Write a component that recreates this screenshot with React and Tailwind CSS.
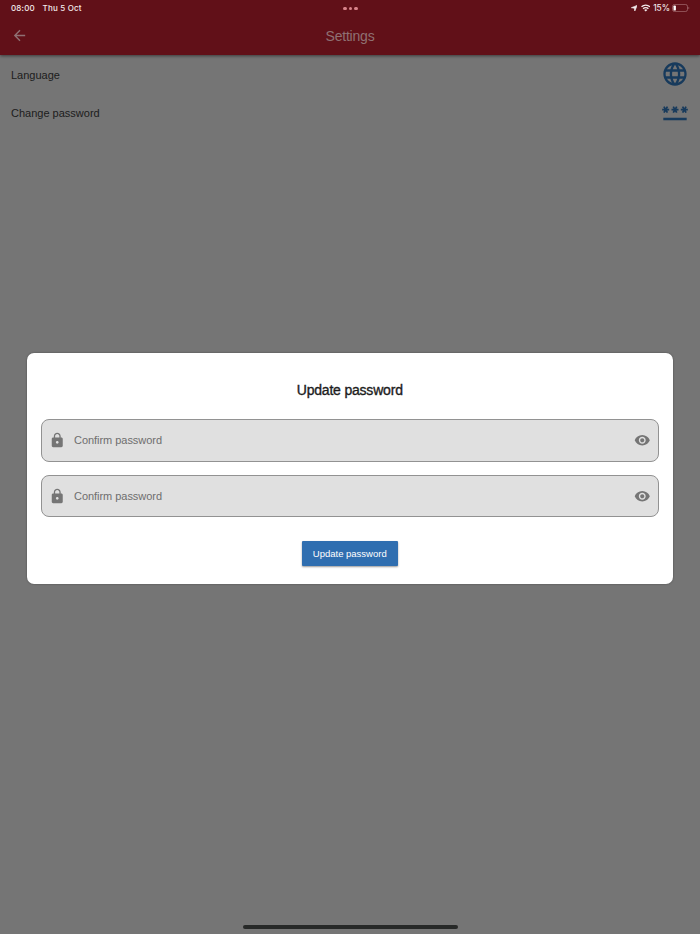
import { MdArrowBack, MdLanguage, MdLock, MdPassword, MdVisibility } from 'react-icons/md'

const SETTINGS = [
  { id: 'language', label: 'Language', Icon: MdLanguage },
  { id: 'password', label: 'Change password', Icon: MdPassword },
]

const FIELDS = ['new', 'confirm']

function StatusBar() {
  return (
    <div className="grid h-[16px] grid-cols-3 items-center pl-[11px] pr-[10px] font-['Inter',sans-serif] text-[8px] font-medium text-[#f3ebec]">
      <div className="flex gap-[7.5px] tracking-[0.2px]">
        <span>08:00</span>
        <span>Thu 5 Oct</span>
      </div>
      <div className="flex justify-center gap-[1.6px] pt-px">
        <span className="size-[3.8px] rounded-full bg-[#d9848b]" />
        <span className="size-[3.8px] rounded-full bg-[#d9848b]" />
        <span className="size-[3.8px] rounded-full bg-[#d9848b]" />
      </div>
      <div className="flex items-center justify-end">
        <svg className="mr-[3.5px] size-[6.5px]" viewBox="0 0 12 12" fill="currentColor">
          <path d="M11.4.6 7 11.4 6.2 5.8.6 5z" stroke="currentColor" strokeWidth="1.2" strokeLinejoin="round" />
        </svg>
        <svg className="mr-[3px] h-[7.5px] w-[9.5px]" viewBox="0 0 18 14" fill="none" stroke="currentColor" strokeWidth="2.7">
          <path d="M1 5.3a11.3 11.3 0 0 1 16 0" />
          <path d="M4 8.8a7 7 0 0 1 10 0" />
          <path d="M6 11.2a4.2 4.2 0 0 1 6 0L9 14z" fill="currentColor" stroke="none" />
        </svg>
        <span className="mr-[2px] text-[8.3px]">15%</span>
        <svg className="h-[8px] w-[18px]" viewBox="0 0 18 8" fill="none">
          <rect x=".5" y=".4" width="15" height="7.2" rx="2.2" stroke="#a1686d" strokeWidth=".8" />
          <rect x="1.5" y="1.4" width="2.4" height="5.2" rx=".9" fill="#fff" />
          <path d="M16.5 2.8c1 .4 1 2 0 2.4z" fill="#a1686d" />
        </svg>
      </div>
    </div>
  )
}

function PasswordField() {
  return (
    <div className="flex h-[42.5px] items-center rounded-[8px] border border-[#929292] bg-[#e0e0e0] pl-[7px] pr-[7.5px] text-[#757575]">
      <MdLock className="size-[16.5px]" />
      <input
        type="text"
        placeholder="Confirm password"
        className="ml-[9px] min-w-0 flex-1 bg-transparent text-[11px] tracking-[-0.04px] outline-none placeholder:text-[#6e6e6e]"
      />
      <MdVisibility className="size-[16.5px]" />
    </div>
  )
}

export default function App() {
  return (
    <div className="relative flex h-[934px] w-[700px] flex-col overflow-hidden bg-[#757575] font-['Liberation_Sans',Arial,sans-serif]">
      <header className="h-[55px] bg-[#611018] shadow-[0_1px_3px_rgba(0,0,0,0.5)]">
        <StatusBar />
        <div className="grid h-[39px] grid-cols-3 items-center px-[11px] text-[#8f7073]">
          <button type="button" aria-label="Back">
            <MdArrowBack className="size-[17px]" />
          </button>
          <h1 className="pt-px text-center text-[14px] tracking-[-0.2px]">Settings</h1>
        </div>
      </header>

      <ul className="flex-1">
        {SETTINGS.map(({ id, label, Icon }) => (
          <li key={id} className="flex h-[38px] items-center justify-between px-[11px] text-[11px] text-[#1c1c1c]">
            <span className="pt-[2px]">{label}</span>
            <Icon className="size-[28px] text-[#173a5c]" />
          </li>
        ))}
      </ul>

      <div className="mx-auto mb-[5px] h-[4px] w-[215px] rounded-full bg-[#272928]" />

      <div className="absolute left-[27px] right-[27.5px] top-[353px] h-[230.5px] rounded-[7px] bg-white pl-[13.5px] pr-[13.5px] shadow-[0_0_2px_rgba(0,0,0,0.4)]">
        <h2 className="pt-[27px] text-center text-[14px] tracking-[-0.2px] text-[#1c1c1c] [-webkit-text-stroke:0.35px_#1c1c1c]">
          Update password
        </h2>
        <div className="mt-[18px] space-y-[13px]">
          {FIELDS.map((name) => (
            <PasswordField key={name} />
          ))}
        </div>
        <button
          type="button"
          className="mx-auto mt-[24px] block h-[25px] w-[96px] rounded-[1px] bg-[#2f6eb0] pt-px text-[9.5px] text-white shadow-[0_1px_2px_rgba(0,0,0,0.4)]"
        >
          Update password
        </button>
      </div>
    </div>
  )
}
